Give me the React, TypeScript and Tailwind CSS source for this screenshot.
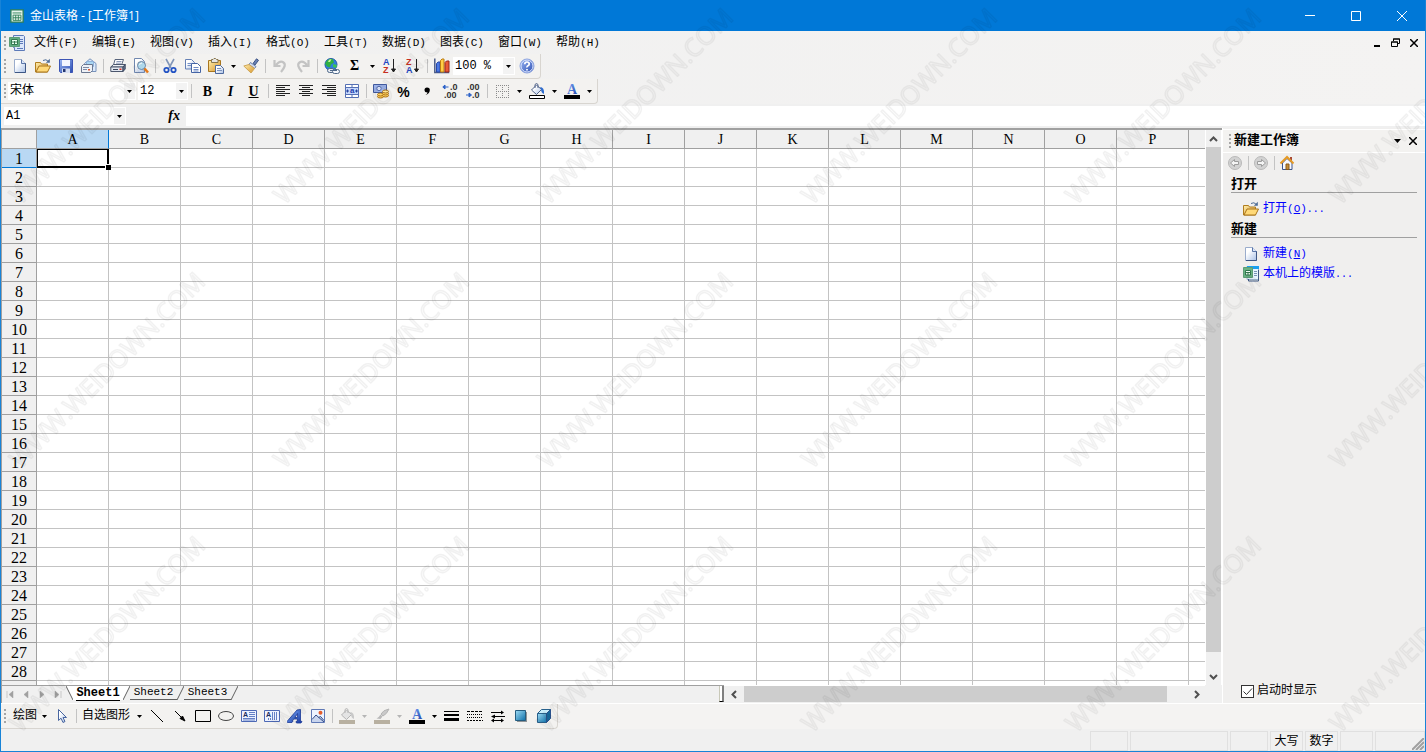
import type { ReactNode } from "react";

const COLUMNS = "ABCDEFGHIJKLMNOPQ".split("");
const ROWS = Array.from({ length: 29 }, (_, i) => (i < 28 ? i + 1 : ""));

const MENUS = [
  ["文件", "F"],
  ["编辑", "E"],
  ["视图", "V"],
  ["插入", "I"],
  ["格式", "O"],
  ["工具", "T"],
  ["数据", "D"],
  ["图表", "C"],
  ["窗口", "W"],
  ["帮助", "H"],
];

interface IconProps {
  children: ReactNode;
  size?: number;
}

const Icon: React.FC<IconProps> = ({ children, size = 16 }) => (
  <svg width={size} height={size} viewBox="0 0 16 16" fill="none" className="shrink-0" aria-hidden="true">
    {children}
  </svg>
);

const Gradients = () => (
  <svg className="absolute h-0 w-0" aria-hidden="true">
    <defs>
      <linearGradient id="paper" x1="0" y1="0" x2="1" y2="1">
        <stop offset="0.3" stopColor="#fff" />
        <stop offset="1" stopColor="#a9c0e6" />
      </linearGradient>
      <linearGradient id="gold" x1="0" y1="0" x2="1" y2="1">
        <stop offset="0" stopColor="#ffefae" />
        <stop offset="1" stopColor="#d9952b" />
      </linearGradient>
      <linearGradient id="blue" x1="0" y1="0" x2="1" y2="1">
        <stop offset="0" stopColor="#9cb8f4" />
        <stop offset="1" stopColor="#2a4cb0" />
      </linearGradient>
      <linearGradient id="teal" x1="0" y1="0" x2="1" y2="1">
        <stop offset="0" stopColor="#9fdcf5" />
        <stop offset="1" stopColor="#0d6fa8" />
      </linearGradient>
      <linearGradient id="letter" x1="0" y1="0" x2="1" y2="1">
        <stop offset="0" stopColor="#7fb0ff" />
        <stop offset="1" stopColor="#1536a0" />
      </linearGradient>
    </defs>
  </svg>
);

const NewIcon = () => (
  <Icon>
    <path d="M2.500 1.500h7l4 4v9h-11z" fill="url(#paper)" stroke="#9aaccc" />
    <path d="M13.500 5v9.500H3" stroke="#3d5684" />
    <path d="M9.500 1.500v4h4" fill="#dce6f8" stroke="#5b76a8" />
  </Icon>
);

const OpenIcon = () => (
  <Icon>
    <path d="M.5 4.500h5l1 1.500h6v8h-12z" fill="url(#gold)" stroke="#b07d1f" />
    <path d="M4 8h11.500l-3 6H1z" fill="#ffd978" stroke="#a8741a" />
    <path d="M8 2.500q3-2 5.500 1" stroke="#4e6c96" />
    <path d="M14.800.8v4h-4z" fill="#4e6c96" />
  </Icon>
);

const SaveIcon = () => (
  <Icon>
    <path d="M1.500 1.500h13v13h-12l-1-1z" fill="url(#blue)" stroke="#3d55b5" />
    <path d="M4 2h8v6H4z" fill="#f3f6ff" />
    <path d="M4 10.500h8V15H4z" fill="#d7dff2" />
    <path d="M5 11h2.500v3H5z" fill="#23356f" />
  </Icon>
);

const MailIcon = () => (
  <Icon>
    <path d="M3.500 5.500L9 .8l6 4.700v8h-11z" fill="#dbe9fb" stroke="#7892ba" />
    <path d="M5.500 3.500h7v5h-7z" fill="#a9d6f2" stroke="#8fb3dc" />
    <path d="M.5 8.500l2-2h9v6l-2 2h-9z" fill="#eef1f6" stroke="#6a7790" />
    <path d="M2 9.500h6M2 11.500h4" stroke="#7e8ba5" />
    <path d="M7 11h2v1.500H7z" fill="#e2562e" />
  </Icon>
);

const PrintIcon = () => (
  <Icon>
    <path d="M5 1.500h8.500L11.500 7h-8z" fill="#fff" stroke="#59657d" />
    <path d="M6.500 3.500h5M6 5.200h5" stroke="#8b99b8" />
    <path d="M.8 9L3.500 6.500h11.700L13 9z" fill="#eef1f6" stroke="#4c576d" />
    <path d="M.8 9H13v4.500H.8z" fill="#e3e8f1" stroke="#4c576d" />
    <path d="M13 9l2.200-2.500v4.500L13 13.500z" fill="#68758f" stroke="#3f4a61" />
    <path d="M3 11.500h5" stroke="#39445a" />
    <path d="M9.500 10.500h2v1.500h-2z" fill="#dc2d1d" />
  </Icon>
);

const PreviewIcon = () => (
  <Icon>
    <path d="M1.500.5h7l3 3v11h-10z" fill="url(#paper)" stroke="#7188b0" />
    <circle cx="8.500" cy="7.500" r="4" fill="#b6e2f6" stroke="#6b86a4" />
    <path d="M6.500 7q.5-2 2.500-2" stroke="#fff" />
    <path d="M11.500 10.500l3.500 4" stroke="#ef7f1a" strokeWidth="2.500" />
  </Icon>
);

const CutIcon = () => (
  <Icon>
    <path d="M4 1l5 9M12 1l-5 9" stroke="#8296b8" strokeWidth="1.600" />
    <circle cx="4.500" cy="12" r="2.200" stroke="#2454c4" strokeWidth="1.800" />
    <circle cx="11.500" cy="12" r="2.200" stroke="#2454c4" strokeWidth="1.800" />
  </Icon>
);

const CopyIcon = () => (
  <Icon>
    <path d="M.5 1.500h6l3 3v6.500h-9z" fill="url(#paper)" stroke="#6580b5" />
    <path d="M2.500 5.500h4M2.500 7.500h4" stroke="#7590c5" />
    <path d="M6.500 5.500h6l3 3v6h-9z" fill="#fff" stroke="#4464a5" />
    <path d="M8.500 9.500h5M8.500 11.500h5M8.500 13h5" stroke="#6f8bc5" />
  </Icon>
);

const PasteIcon = () => (
  <Icon>
    <path d="M.5 2.500h12v11H.5z" fill="url(#gold)" stroke="#a9761e" />
    <path d="M3.500 1.500h1.500l1-1h1.500l1 1H10v3H3.500z" fill="#e7e7e7" stroke="#86764c" />
    <path d="M7.500 7.500h5l3 3v5h-8z" fill="url(#paper)" stroke="#4e6a9e" />
    <path d="M9 10.500h4M9 12.500h5" stroke="#7b93be" />
  </Icon>
);

const BrushIcon = () => (
  <Icon>
    <path d="M10 5.500L13.500.8l2 1.500L12 7z" fill="#6a82b5" stroke="#3d5486" />
    <path d="M7.500 4.500l5.500 4-1.500 2-5.500-4z" fill="#d2dbef" stroke="#6b7fa7" />
    <path d="M6 6.500l5.500 4-3.500 4.500L.8 8z" fill="url(#gold)" stroke="#cfa658" />
  </Icon>
);

const UndoIcon = ({ flip = false }: { flip?: boolean }) => (
  <Icon>
    <path
      d={flip ? "M13.500 2v6h-6M12 7Q8 2 4.500 4.500T7 14" : "M2.500 2v6h6M4 7Q8 2 11.500 4.500T9 14"}
      stroke="#c3c3c3"
      strokeWidth="2.200"
    />
  </Icon>
);

const GlobeIcon = () => (
  <Icon>
    <circle cx="7" cy="6.500" r="6" fill="#2f7fe0" stroke="#225ba8" />
    <path d="M3 2.500q4-3 6-1l1 3-3 2-1 3-3-1-2-3z" fill="#2fb043" />
    <path d="M5 1.800q1-.7 2.500-.5L6 4H4z" fill="#c9f59c" />
    <path d="M9 6l4 1-1 3-3-1z" fill="#3cc455" />
    <rect x="3.500" y="10.500" width="6.500" height="4" rx="2" fill="#e4eaf2" stroke="#4f6888" />
    <rect x="8.500" y="11.500" width="7" height="4" rx="2" fill="#f4f7fb" stroke="#4f6888" />
    <path d="M6 12.500h7" stroke="#4f6888" />
  </Icon>
);

const SortIcon = ({ desc = false }: { desc?: boolean }) => (
  <Icon>
    <text x="1" y="7" fontSize="9" fontWeight="700" fontFamily="Liberation Sans" fill={desc ? "#c62f22" : "#2347c2"}>
      {desc ? "Z" : "A"}
    </text>
    <text x="1" y="15" fontSize="9" fontWeight="700" fontFamily="Liberation Sans" fill={desc ? "#2347c2" : "#c62f22"}>
      {desc ? "A" : "Z"}
    </text>
    <path d="M11.500 1v12.500M9.500 11l2 3 2-3z" fill="#222" stroke="#222" />
  </Icon>
);

const ChartIcon = () => (
  <Icon>
    <path d="M.8.500v14h14.500" stroke="#4c5c88" strokeWidth="1.500" />
    <path d="M2.500 5.500L4 4h2v10H2.500z" fill="#4b78e2" stroke="#2849a8" />
    <path d="M6.500 2.500L8 1h2v13H6.500z" fill="#ffce45" stroke="#bd7c12" />
    <path d="M11 4.500L12.500 3h2.500v11h-4z" fill="#e95837" stroke="#9a2518" />
  </Icon>
);

const HelpIcon = () => (
  <Icon>
    <circle cx="8" cy="8" r="7" fill="url(#blue)" stroke="#8aa2de" />
    <circle cx="8" cy="8" r="6" stroke="#dbe5ff" />
    <path d="M5.800 6.200q0-2.200 2.200-2.200t2.200 2q0 1.200-1.200 1.800T8 9.500M8 11v1.600" stroke="#fff" strokeWidth="1.700" />
  </Icon>
);

const AlignIcon = ({ kind }: { kind: "left" | "center" | "right" }) => {
  const paths = {
    left: "M1 2.500h14M1 4.500h9M1 6.500h14M1 8.500h9M1 10.500h14M1 12.500h9",
    center: "M1 2.500h14M4 4.500h8M1 6.500h14M4 8.500h8M1 10.500h14M4 12.500h8",
    right: "M1 2.500h14M6 4.500h9M1 6.500h14M6 8.500h9M1 10.500h14M6 12.500h9",
  };
  return (
    <Icon>
      <path d={paths[kind]} stroke="#222" />
    </Icon>
  );
};

const MergeIcon = () => (
  <Icon>
    <path d="M1.500 1.500h13v13h-13z" fill="#fff" stroke="#5570b4" />
    <path d="M1 4.500h14M1 11.500h14M8 1v3M8 12v3" stroke="#5570b4" />
    <path d="M2 5h12v6H2z" fill="#c6d7fb" />
    <path d="M2 8h3M14 8h-3M3.500 6.500v3M12.500 6.500v3" stroke="#2745a0" />
    <text x="6" y="10" fontSize="8" fontWeight="700" fontFamily="Liberation Sans" fill="#1f3fb0">a</text>
  </Icon>
);

const CurrencyIcon = () => (
  <Icon>
    <path d="M.5 1.500h13v8H.5z" fill="#9cb2e8" stroke="#40599d" />
    <circle cx="6" cy="5.500" r="2.200" fill="#dfe8ff" stroke="#556eb1" />
    <ellipse cx="7.500" cy="13.500" rx="3" ry="1.500" fill="#ffd564" stroke="#a96d12" />
    <ellipse cx="7.500" cy="11.500" rx="3" ry="1.500" fill="#ffd564" stroke="#a96d12" />
    <ellipse cx="12.500" cy="12.500" rx="3" ry="1.500" fill="#ffd564" stroke="#a96d12" />
    <ellipse cx="12.500" cy="10.500" rx="3" ry="1.500" fill="#ffd564" stroke="#a96d12" />
    <ellipse cx="12.500" cy="8.500" rx="3" ry="1.500" fill="#ffe795" stroke="#a96d12" />
  </Icon>
);

const DecimalIcon = ({ less = false }: { less?: boolean }) => (
  <Icon>
    <text x={less ? 2 : 8} y="7" fontSize="9" fontWeight="700" fontFamily="Liberation Sans" fill="#333">
      {less ? ".00" : ".0"}
    </text>
    <text x={less ? 7 : 2} y="15" fontSize="9" fontWeight="700" fontFamily="Liberation Sans" fill="#333">
      {less ? ".0" : ".00"}
    </text>
    {less ? (
      <path d="M1 12h3M4 10v4l2.500-2z" fill="#2c62c8" stroke="#2c62c8" />
    ) : (
      <path d="M6.500 4H3M3 2v4L.8 4z" fill="#2c62c8" stroke="#2c62c8" />
    )}
  </Icon>
);

const BorderIcon = () => (
  <Icon>
    <path d="M2 2.500h13M2 8.500h13M2 14.500h13M2.500 2v13M8.500 2v13M14.500 2v13" stroke="#8b8b8b" strokeDasharray="1 1" />
  </Icon>
);

const FillIcon = ({ disabled = false }: { disabled?: boolean }) => (
  <Icon>
    <path
      d="M2.500 7l5-5 5 4.500-5 5z"
      fill={disabled ? "#e4e4e4" : "url(#paper)"}
      stroke={disabled ? "#b5b5b5" : "#52658b"}
    />
    <path d="M6 5V1.500q1.500-2 3 0V5" stroke={disabled ? "#b5b5b5" : "#52658b"} />
    <path d="M11 4q4.500 0 4 7-3-1-3-5z" fill={disabled ? "#c8c8c8" : "#2d6cd0"} />
    {disabled ? <path d="M0 12h16v4H0z" fill="#b8b0a0" /> : <path d="M.5 12.500h15v3H.5z" fill="#fff" stroke="#000" />}
  </Icon>
);

const FontColorIcon = () => (
  <Icon>
    <text x="3" y="11" fontSize="14" fontWeight="700" fontFamily="Liberation Serif" fill="url(#letter)">A</text>
    <path d="M0 12h16v4H0z" fill="#000" />
  </Icon>
);

const PenIcon = () => (
  <Icon>
    <path d="M15 1q-6 1-8 5l2 2q4-2 6-7z" fill="#c9c9c9" stroke="#b5b5b5" />
    <path d="M6.500 6.500l2 2-2 2.500-4-.5q2-.5 4-4z" fill="#b9b9b9" />
    <path d="M0 12h16v4H0z" fill="#b8b0a0" />
  </Icon>
);

const SheetIcon = () => (
  <Icon>
    <path d="M4.500.500h10l1 1v14h-10v-3h-1z" fill="#dce7fb" stroke="#5d7ab8" />
    <path d="M11 4.500h3M11 6.500h3M11 8.500h3M8 13.500h6" stroke="#5d7ab8" />
    <path d="M.5 2.500h10v9H.5z" fill="#60ad80" stroke="#5c9c76" />
    <path d="M2.500 4.500h6v5h-6zM2.500 7h6M5.500 6v3.500" fill="#e9fff0" stroke="#32784e" />
  </Icon>
);

const TemplateIcon = () => (
  <Icon>
    <path d="M4 .5h11.500v13H4z" fill="#e7f5ff" stroke="#9db4cc" />
    <path d="M4 0h12v3H4z" fill="#1aa0f0" />
    <path d="M5.500 13v2h10V4" fill="none" stroke="#3f5a86" />
    <path d="M11 5.500h3M11 7.500h3M11 9.500h3" stroke="#7893b5" />
    <path d="M.5 1.500h9v10h-9z" fill="#68b384" stroke="#5c9c76" />
    <path d="M2.500 4.500h5v4.500h-5zM2.500 6.500h5M5 6v3" fill="#effff4" stroke="#32784e" />
  </Icon>
);

const NavIcon = ({ next = false }: { next?: boolean }) => (
  <Icon>
    <circle cx="8" cy="8" r="6.500" fill="#d2d2d2" stroke="#b9b9b9" />
    <path
      d={next ? "M12.500 8L8.500 4.500v2h-4v3h4v2z" : "M3.500 8l4-3.500v2h4v3h-4v2z"}
      fill="#f4f4f4"
      stroke="#9c9c9c"
    />
  </Icon>
);

const HomeIcon = () => (
  <Icon>
    <path d="M3.500 8v6.500h9.500V8L8 3.500z" fill="#f7f9ff" stroke="#3c558a" />
    <path d="M11 2h2v4h-2z" fill="#a84a35" />
    <path d="M1.500 8.500L8 2l6.500 6.500" stroke="#e59a26" strokeWidth="2" />
    <path d="M7 9h3v5.500H7z" fill="#c48c37" stroke="#8a5a19" />
  </Icon>
);

const TextBoxIcon = ({ vertical = false }: { vertical?: boolean }) => (
  <Icon>
    <path d="M.5 2.500h15v11H.5z" fill="#edf2ff" stroke="#4d69b5" />
    <text x="2" y="9" fontSize="7" fontWeight="700" fontFamily="Liberation Sans" fill="#1c2c60">A</text>
    <path
      d={vertical ? "M8.500 4v8M10.500 4v8M12.500 4v8M4.500 10v2M6.500 10v2" : "M8 4.500h6M8 6.500h6M8 8.500h6M2 10.500h12M2 12h12"}
      stroke="#6480c5"
    />
  </Icon>
);

const PictureIcon = () => (
  <Icon>
    <path d="M1.500 1.500h13v13h-13z" fill="#edf3ff" stroke="#6079b5" />
    <path d="M2 12l4-5 3 3 2-1.500 3 4V14H2z" fill="#c9d5ee" />
    <path d="M2 11.500L6 7l8 7M8.500 9.500L10.500 8.500l3.500 4" stroke="#314a87" />
    <circle cx="10.500" cy="4.800" r="2" fill="#e45d2b" />
  </Icon>
);

const CubeIcon = () => (
  <Icon>
    <path d="M1.500 5.500l4-4h9l-4 4z" fill="#c8edfb" stroke="#29618c" />
    <path d="M1.500 5.500h9v9h-9z" fill="url(#teal)" stroke="#29618c" />
    <path d="M10.500 5.500l4-4v9l-4 4z" fill="#17699d" stroke="#29518c" />
  </Icon>
);

const ShadowIcon = () => (
  <Icon>
    <path d="M4 4h10v10H4z" fill="#8f9396" />
    <path d="M2.500 2.500h10v10h-10z" fill="url(#teal)" stroke="#255d80" />
  </Icon>
);

const Tool = ({ label, children }: { label: string; children: ReactNode }) => (
  <button aria-label={label} className="flex h-[22px] w-[23px] shrink-0 items-center justify-center">
    {children}
  </button>
);

const Arrow = ({ muted = false }: { muted?: boolean }) => (
  <svg width="5" height="3" viewBox="0 0 5 3" className="shrink-0" aria-hidden="true">
    <path d="M0 0h5L2.500 3z" fill={muted ? "#b5b5b5" : "#000"} />
  </svg>
);

const Drop = ({ label, muted = false }: { label: string; muted?: boolean }) => (
  <button aria-label={label} className="flex h-[22px] w-3 shrink-0 items-center justify-center">
    <Arrow muted={muted} />
  </button>
);

const Sep = () => (
  <span className="flex w-[6px] shrink-0 justify-center">
    <span className="h-[14px] w-px bg-[#c3c3c3]" />
  </span>
);

const Grip = () => (
  <span className="flex w-[6px] shrink-0 flex-col items-center gap-[2px]">
    <span className="size-[2px] bg-[#a5a5a5]" />
    <span className="size-[2px] bg-[#a5a5a5]" />
    <span className="size-[2px] bg-[#a5a5a5]" />
    <span className="size-[2px] bg-[#a5a5a5]" />
  </span>
);

interface ComboProps {
  label: string;
  value: string;
  width: string;
}

const Combo: React.FC<ComboProps> = ({ label, value, width }) => (
  <span className={`relative flex h-[18px] shrink-0 bg-white ${width}`}>
    <select aria-label={label} className="w-full appearance-none bg-transparent pl-[2px] text-xs leading-4 outline-none">
      <option>{value}</option>
    </select>
    <span className="pointer-events-none absolute inset-y-px right-px flex w-[11px] items-center justify-center bg-[#f3f3f3]">
      <Arrow />
    </span>
  </span>
);

const Bar = ({ children }: { children: ReactNode }) => (
  <div className="flex h-[25px] w-fit items-center rounded-br-sm border-r border-b border-[#d8d5d0] bg-[#f3f2f0] pl-px pr-[2px]">
    <Grip />
    {children}
  </div>
);

const TitleBar = () => (
  <header className="flex h-[31px] shrink-0 items-center bg-[#0078d7] pl-[9px] text-white">
    <Icon size={14}>
      <path d="M1 1h14v14H1z" fill="#e6f5ec" stroke="#2c7d55" strokeWidth="1.500" />
      <path d="M3 4.500h10M3.500 7h9v6h-9zM3.500 10h9M6.500 7v6M9.500 7v6" stroke="#2c7d55" />
    </Icon>
    <h1 className="flex-1 pl-[6px] font-['Open_Sans','Noto_Sans_CJK_SC',sans-serif] text-xs">金山表格 - [工作簿1]</h1>
    <button aria-label="最小化" className="flex h-full w-[46px] items-center justify-center">
      <svg width="10" height="10" stroke="#fff"><path d="M0 4.500h10" /></svg>
    </button>
    <button aria-label="最大化" className="flex h-full w-[46px] items-center justify-center">
      <svg width="10" height="10" fill="none" stroke="#fff"><path d="M.5.5h9v9h-9z" /></svg>
    </button>
    <button aria-label="关闭" className="flex h-full w-[46px] items-center justify-center">
      <svg width="10" height="10" stroke="#fff"><path d="M0 0l10 10M10 0L0 10" /></svg>
    </button>
  </header>
);

const MenuBar = () => (
  <nav className="flex h-[23px] items-center pl-px">
    <Grip />
    <span className="pl-px"><SheetIcon /></span>
    <div className="flex pl-[9px]">
      {MENUS.map(([name, key]) => (
        <button key={key} className="w-[58px] text-left whitespace-nowrap">
          {name}
          <span className="text-[11px]">({key})</span>
        </button>
      ))}
    </div>
    <div className="ml-auto flex items-center gap-[10px] pr-[7px]">
      <button aria-label="最小化工作簿">
        <svg width="9" height="9" className="block"><path d="M2 7h6v2H2z" /></svg>
      </button>
      <button aria-label="还原工作簿">
        <svg width="9" height="9" fill="none" stroke="#000" className="block">
          <path d="M2.500 3V1h6v4.500h-2M.5 4h6v4.500h-6zM2 1h7M0 4h7" />
        </svg>
      </button>
      <button aria-label="关闭工作簿">
        <svg width="8" height="8" stroke="#000" strokeWidth="1.500" className="block"><path d="M0 0l8 8M8 0L0 8" /></svg>
      </button>
    </div>
  </nav>
);

const StandardBar = () => (
  <Bar>
    <Tool label="新建"><NewIcon /></Tool>
    <Tool label="打开"><OpenIcon /></Tool>
    <Tool label="保存"><SaveIcon /></Tool>
    <Tool label="邮件"><MailIcon /></Tool>
    <Sep />
    <Tool label="打印"><PrintIcon /></Tool>
    <Tool label="打印预览"><PreviewIcon /></Tool>
    <Sep />
    <Tool label="剪切"><CutIcon /></Tool>
    <Tool label="复制"><CopyIcon /></Tool>
    <Tool label="粘贴"><PasteIcon /></Tool>
    <Drop label="粘贴选项" />
    <Tool label="格式刷"><BrushIcon /></Tool>
    <Sep />
    <Tool label="撤消"><UndoIcon /></Tool>
    <Tool label="恢复"><UndoIcon flip /></Tool>
    <Sep />
    <Tool label="超链接"><GlobeIcon /></Tool>
    <Tool label="自动求和">
      <span className="font-['Liberation_Serif',serif] text-sm font-bold">Σ</span>
    </Tool>
    <Drop label="求和选项" />
    <Tool label="升序"><SortIcon /></Tool>
    <Tool label="降序"><SortIcon desc /></Tool>
    <Sep />
    <Tool label="图表"><ChartIcon /></Tool>
    <Combo label="显示比例" value="100 %" width="w-[62px]" />
    <Tool label="帮助"><HelpIcon /></Tool>
  </Bar>
);

const LETTER = "pt-[2px] font-['Liberation_Serif',serif] text-sm font-bold";

const FormatBar = () => (
  <Bar>
    <Combo label="字体" value="宋体" width="w-[128px]" />
    <span className="w-[2px]" />
    <Combo label="字号" value="12" width="w-[50px]" />
    <Sep />
    <span className="w-[2px]" />
    <Tool label="加粗"><b className={LETTER}>B</b></Tool>
    <Tool label="倾斜"><i className={LETTER}>I</i></Tool>
    <Tool label="下划线"><u className={LETTER}>U</u></Tool>
    <Sep />
    <Tool label="左对齐"><AlignIcon kind="left" /></Tool>
    <Tool label="居中"><AlignIcon kind="center" /></Tool>
    <Tool label="右对齐"><AlignIcon kind="right" /></Tool>
    <Tool label="合并及居中"><MergeIcon /></Tool>
    <Sep />
    <Tool label="货币样式"><CurrencyIcon /></Tool>
    <Tool label="百分比样式"><span className="pt-[2px] font-['Liberation_Sans',sans-serif] text-sm font-bold">%</span></Tool>
    <Tool label="千位分隔样式">
      <Icon><path d="M8 4.500q3 0 2.800 2.800Q10.500 11 6.500 12q2-1.500 2-2.500-3 0-3-2.500T8 4.500z" fill="#000" /></Icon>
    </Tool>
    <Tool label="增加小数位数"><DecimalIcon /></Tool>
    <Tool label="减少小数位数"><DecimalIcon less /></Tool>
    <Sep />
    <Tool label="边框"><BorderIcon /></Tool>
    <Drop label="边框选项" />
    <Tool label="填充颜色"><FillIcon /></Tool>
    <Drop label="填充颜色选项" />
    <Tool label="字体颜色"><FontColorIcon /></Tool>
    <Drop label="字体颜色选项" />
  </Bar>
);

const FormulaBar = () => (
  <div className="flex h-6 items-center pl-[3px]">
    <Combo label="名称框" value="A1" width="w-[122px]" />
    <span className="flex w-[60px] justify-end pr-[6px] font-['Liberation_Serif',serif] text-sm leading-4 font-bold italic">fx</span>
    <input aria-label="编辑栏" className="h-5 min-w-0 flex-1 bg-white outline-none" />
  </div>
);

const Grid = () => (
  <div className="min-h-0 min-w-0 flex-1 overflow-hidden bg-white">
    <table className="w-[1259px] table-fixed border-separate border-spacing-0 text-center font-['Liberation_Serif',serif] text-base">
      <thead>
        <tr className="h-[19px]">
          <th className="w-[35px] border-r border-b border-[#a0a0a0] bg-[#f0f0f0] p-0" />
          {COLUMNS.map((c) => (
            <th
              key={c}
              className={`w-[72px] border-r border-b p-0 pt-[2px] text-sm leading-4 font-normal ${
                c === "A" ? "border-[#0078d7] border-b-[#a0a0a0] bg-[#b9d8f3]" : "border-[#a0a0a0] bg-[#f0f0f0]"
              }`}
            >
              {c}
            </th>
          ))}
        </tr>
      </thead>
      <tbody>
        {ROWS.map((r) => (
          <tr key={r} className="h-[19px]">
            <th
              className={`border-r border-b p-0 pt-[2px] leading-4 font-normal ${
                r === 1 ? "border-[#0078d7] border-r-[#a0a0a0] bg-[#b9d8f3]" : "border-[#a0a0a0] bg-[#f0f0f0]"
              }`}
            >
              {r}
            </th>
            {COLUMNS.map((c) =>
              r === 1 && c === "A" ? (
                <td key={c} className="relative z-10 border-r border-b border-[#c3c3c3] p-0">
                  <span className="absolute inset-0 -right-px -bottom-px border border-r-2 border-b-2 border-black" />
                  <span className="absolute -right-[3px] -bottom-[3px] size-[6px] border-t border-l border-white bg-black" />
                </td>
              ) : (
                <td key={c} className="border-r border-b border-[#c3c3c3] p-0" />
              ),
            )}
          </tr>
        ))}
      </tbody>
    </table>
  </div>
);

const VerticalScroll = () => (
  <div className="flex w-[17px] shrink-0 flex-col border-x border-white bg-[#f0f0f0]">
    <button aria-label="向上滚动" className="flex h-[17px] shrink-0 items-center justify-center">
      <svg width="9" height="6" fill="none" stroke="#505050" strokeWidth="2"><path d="M1 5l3.500-3.500L8 5" /></svg>
    </button>
    <div className="h-[91%] bg-[#cdcdcd]" />
    <button aria-label="向下滚动" className="mt-auto flex h-[17px] shrink-0 items-center justify-center">
      <svg width="9" height="6" fill="none" stroke="#505050" strokeWidth="2"><path d="M1 1l3.500 3.500L8 1" /></svg>
    </button>
  </div>
);

const Slash = ({ prev = "#f0f0f0" }: { prev?: string }) => (
  <svg width="7" height="14" className="shrink-0" aria-hidden="true">
    <path d="M0 0h7L0 14z" fill={prev} />
    <path d="M7 0L0 14" stroke="#606060" />
  </svg>
);

const SHEET_NAV = [
  ["第一张", "M1 0v7M7 0v7L3 3.500z"],
  ["上一张", "M6 0v7L2 3.500z"],
  ["下一张", "M2 0v7l4-3.500z"],
  ["最后一张", "M7 0v7M1 0v7l4-3.500z"],
];

const SheetTabs = () => (
  <div className="flex h-[18px] shrink-0 bg-[#f0f0f0] pr-[17px]">
    <div className="flex w-3/5 items-start border-t border-[#a0a0a0]">
      <div className="flex h-4 w-16 shrink-0 items-center justify-around">
        {SHEET_NAV.map(([label, d]) => (
          <button key={label} aria-label={label}>
            <svg width="8" height="7" className="block" fill="#a0a0a0" stroke="#a0a0a0" strokeWidth=".5"><path d={d} /></svg>
          </button>
        ))}
      </div>
      <svg width="7" height="14" className="shrink-0" aria-hidden="true">
        <path d="M0 0h7v14z" fill="#fff" />
        <path d="M0 0l7 14" stroke="#606060" />
      </svg>
      <button className="h-[14px] w-[50px] bg-white text-xs leading-[13px] font-bold">
        <span className="border-b border-black">Sheet1</span>
      </button>
      <Slash prev="#fff" />
      <button className="h-[14px] w-[47px] border-b border-[#606060] text-[11px] leading-[13px]">Sheet2</button>
      <Slash />
      <button className="h-[14px] w-[47px] border-b border-[#606060] text-[11px] leading-[13px]">Sheet3</button>
      <Slash />
      <span className="ml-auto h-4 w-[5px] border-r-2 border-b border-l border-r-[#808080] border-b-black border-l-[#c8c8b8] bg-white" />
    </div>
    <div className="flex h-[17px] flex-1 items-center border-t border-white">
      <button aria-label="向左滚动" className="flex w-5 items-center justify-center">
        <svg width="6" height="9" fill="none" stroke="#505050" strokeWidth="2"><path d="M5 1L1.500 4.500 5 8" /></svg>
      </button>
      <div className="h-full w-[88%] bg-[#cdcdcd]" />
      <button aria-label="向右滚动" className="ml-auto flex w-[17px] items-center justify-center">
        <svg width="6" height="9" fill="none" stroke="#505050" strokeWidth="2"><path d="M1 1l3.500 3.500L1 8" /></svg>
      </button>
    </div>
  </div>
);

const TaskLink = ({ icon, text, shortcut, tail }: { icon: ReactNode; text: string; shortcut?: string; tail?: string }) => (
  <a href="#" className="flex items-center gap-1 text-[#0000ff]">
    {icon}
    <span>
      {text}
      {shortcut && (
        <span className="text-[11px]">
          (<u>{shortcut}</u>)
        </span>
      )}
      <span className="text-[10px]">{tail}</span>
    </span>
  </a>
);

const TaskPane = () => (
  <aside className="flex w-[203px] shrink-0 flex-col border-l border-white bg-[#f0efee] pt-px">
    <div className="flex h-6 shrink-0 items-center border-y border-white bg-[#f3f2f0] pr-2 pl-1">
      <Grip />
      <h2 className="flex-1 pl-px text-[13px] font-bold">新建工作簿</h2>
      <svg width="7" height="4" className="mr-2" aria-hidden="true"><path d="M0 0h7L3.500 4z" /></svg>
      <button aria-label="关闭任务窗格">
        <svg width="8" height="8" stroke="#000" strokeWidth="1.500" className="block"><path d="M0 0l8 8M8 0L0 8" /></svg>
      </button>
    </div>
    <div className="flex h-5 items-center gap-[2px] pl-1">
      <button aria-label="后退"><NavIcon /></button>
      <Sep />
      <button aria-label="前进"><NavIcon next /></button>
      <Sep />
      <button aria-label="主页"><HomeIcon /></button>
    </div>
    <div className="px-2">
      <h3 className="mt-1 h-4 border-b border-[#a0a0a0] text-[13px] leading-4 font-bold">打开</h3>
      <div className="pt-2 pb-1 pl-3">
        <TaskLink icon={<OpenIcon />} text="打开" shortcut="O" tail="..." />
      </div>
      <h3 className="mt-px h-4 border-b border-[#a0a0a0] text-[13px] leading-4 font-bold">新建</h3>
      <div className="flex flex-col gap-1 pt-2 pl-3">
        <TaskLink icon={<NewIcon />} text="新建" shortcut="N" />
        <TaskLink icon={<TemplateIcon />} text="本机上的模版" tail="..." />
      </div>
    </div>
    <label className="mt-auto mb-1 flex items-center gap-[3px] pl-[18px]">
      <span className="relative flex size-[13px]">
        <input type="checkbox" defaultChecked className="size-[13px] appearance-none border border-[#333] bg-white" />
        <svg width="13" height="13" className="pointer-events-none absolute inset-0" fill="none" stroke="#333">
          <path d="M2.500 6.500l3 3 5.500-6" />
        </svg>
      </span>
      启动时显示
    </label>
  </aside>
);

const DrawBar = () => (
  <Bar>
    <button className="w-[30px] pl-1 whitespace-nowrap">绘图</button>
    <Drop label="绘图菜单" />
    <Tool label="选择对象">
      <Icon>
        <path d="M4.500 1.500v11l2.500-2.300 2 4.300 2-1-2-4h3.500z" fill="url(#paper)" stroke="#4966a0" />
      </Icon>
    </Tool>
    <Sep />
    <button className="w-[54px] text-center whitespace-nowrap">自选图形</button>
    <Drop label="自选图形菜单" />
    <Tool label="直线"><Icon><path d="M2 2l12 12" stroke="#000" /></Icon></Tool>
    <Tool label="箭头"><Icon><path d="M3 3l7 7M13 13l-5-2.500L10.500 8z" fill="#000" stroke="#000" /></Icon></Tool>
    <Tool label="矩形"><Icon><path d="M.5 2.500h15v11H.5z" stroke="#000" /></Icon></Tool>
    <Tool label="椭圆"><Icon><ellipse cx="8" cy="8" rx="7.500" ry="4.500" stroke="#444" /></Icon></Tool>
    <Tool label="文本框"><TextBoxIcon /></Tool>
    <Tool label="竖排文本框"><TextBoxIcon vertical /></Tool>
    <Tool label="艺术字">
      <Icon><path d="M0 13.500L10 2l3.500-.5V13l1.500.5-1 1.500h-4.500l-.5-1.500 1.500-.5v-2H7L5.500 12l.5 1-1 1.500H.5zM8 9.500h2.500v-4z" fill="url(#letter)" stroke="#1b3896" strokeWidth=".8" fillRule="evenodd" /></Icon>
    </Tool>
    <Tool label="图片"><PictureIcon /></Tool>
    <Sep />
    <Tool label="形状填充"><FillIcon disabled /></Tool>
    <Drop label="形状填充选项" muted />
    <Tool label="线条颜色"><PenIcon /></Tool>
    <Drop label="线条颜色选项" muted />
    <Tool label="文字颜色"><FontColorIcon /></Tool>
    <Drop label="文字颜色选项" />
    <Tool label="线型">
      <Icon><path d="M0 3h15v1H0zM0 6h15v2H0zM0 10h15v3H0z" fill="#000" /></Icon>
    </Tool>
    <Tool label="虚线线型">
      <Icon>
        <path d="M0 3.500h16" stroke="#000" strokeDasharray="3 1" />
        <path d="M0 6.500h16M0 9.500h16" stroke="#000" strokeDasharray="1 1" />
        <path d="M0 12.500h16" stroke="#000" strokeDasharray="2 1" />
      </Icon>
    </Tool>
    <Tool label="箭头样式">
      <Icon>
        <path d="M1 4.500h11M4 8.500h11M2 12.500h11" stroke="#000" />
        <path d="M11 2.500l3 2-3 2zM5 6.500l-4 2 4 2zM11 10.500l3 2-3 2zM4 10.500v4l-3-2z" fill="#000" />
      </Icon>
    </Tool>
    <Tool label="阴影"><ShadowIcon /></Tool>
    <Tool label="三维"><CubeIcon /></Tool>
  </Bar>
);

const StatusBar = () => (
  <footer className="flex h-[22px] shrink-0 items-stretch justify-end gap-[2px] bg-[#f0f0f0] pt-[2px] text-center leading-5">
    <span className="w-[38px] border border-[#e0e0e0]" />
    <span className="w-[98px] border border-[#e0e0e0]" />
    <span className="w-[38px] border border-[#e0e0e0]" />
    <span className="w-[33px] border border-[#e0e0e0]">大写</span>
    <span className="w-[33px] border border-[#e0e0e0]">数字</span>
    <span className="w-[33px] border border-[#e0e0e0]" />
    <span className="flex w-[50px] items-end justify-end border border-[#e0e0e0]">
      <svg width="12" height="12" stroke="#a0a0a0" strokeWidth="2" aria-hidden="true">
        <path d="M0 12L12 0M4 12l8-8M8 12l4-4" />
      </svg>
    </span>
  </footer>
);

const Watermark = () => (
  <svg className="pointer-events-none absolute inset-0 h-full w-full" aria-hidden="true">
    <defs>
      <pattern id="mark" width="264" height="264" patternUnits="userSpaceOnUse">
        <text
          x="106"
          y="115"
          textAnchor="middle"
          transform="rotate(-45 106 106)"
          fontFamily="Open Sans"
          fontSize="25"
          fill="none"
          stroke="#000"
          strokeWidth="1.500"
          strokeLinejoin="round"
          strokeOpacity="0.055"
        >
          WWW.WEIDOWN.COM
        </text>
      </pattern>
    </defs>
    <rect width="100%" height="100%" fill="url(#mark)" />
  </svg>
);

export default function App() {
  return (
    <div className="relative flex h-screen flex-col overflow-hidden border-x border-b border-[#1883d7] bg-[#f0f0f0] font-['Liberation_Mono','Noto_Sans_CJK_SC',monospace] text-xs text-black">
      <Gradients />
      <TitleBar />
      <div className="shrink-0 bg-linear-to-r from-[#f0f0f0] to-[#f4f3f2]">
        <MenuBar />
        <StandardBar />
        <FormatBar />
      </div>
      <FormulaBar />
      <main className="flex min-h-0 flex-1">
        <div className="flex min-w-0 flex-1 flex-col border-t-2 border-l border-[#a0a0a0]">
          <div className="flex min-h-0 flex-1">
            <Grid />
            <VerticalScroll />
          </div>
          <SheetTabs />
        </div>
        <TaskPane />
      </main>
      <div className="shrink-0 border-t border-white bg-[#f4f3f2]">
        <DrawBar />
      </div>
      <StatusBar />
      <Watermark />
    </div>
  );
}
